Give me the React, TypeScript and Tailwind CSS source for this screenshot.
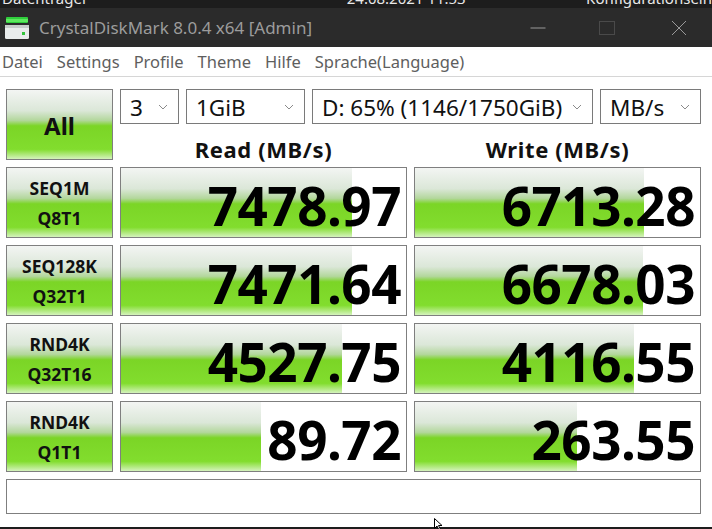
import React from "react";

interface Row { l1: string; l2: string; read: string; readPct: number; write: string; writePct: number }

const rows: Row[] = [
  { l1: "SEQ1M", l2: "Q8T1", read: "7478.97", readPct: 81, write: "6713.28", writePct: 80.5 },
  { l1: "SEQ128K", l2: "Q32T1", read: "7471.64", readPct: 81, write: "6678.03", writePct: 80 },
  { l1: "RND4K", l2: "Q32T16", read: "4527.75", readPct: 77.5, write: "4116.55", writePct: 77 },
  { l1: "RND4K", l2: "Q1T1", read: "89.72", readPct: 49, write: "263.55", writePct: 57 },
];

const green =
  "bg-[linear-gradient(180deg,#f3f5f3_0%,#dbe7d8_30%,#b3d79c_44%,#7bd526_52%,#82dd2e_86%,#d5f3bd_100%)]";

function Chevron() {
  return (
    <svg width="10" height="6" viewBox="0 0 10 6" className="shrink-0">
      <path d="M1 1l4 4 4-4" fill="none" stroke="#8a8a8a" strokeWidth="1" />
    </svg>
  );
}

function Select({ value, w }: { value: string; w: string }) {
  return (
    <div className={`${w} h-[35px] border border-[#7a7a7a] bg-white flex items-center justify-between pl-[9px] pr-[10px]`}>
      <span className="text-[22.5px] text-[#111] leading-none pt-[3px]">{value}</span>
      <Chevron />
    </div>
  );
}

function Label({ a, b }: { a: string; b?: string }) {
  return (
    <div className={`w-[107px] h-[71px] border border-[#7f7f7f] ${green} flex flex-col items-center justify-center`}>
      <span className="text-[17.5px] font-bold leading-[30px] text-[#111]">{a}</span>
      {b && <span className="text-[17.5px] font-bold leading-[30px] text-[#111]">{b}</span>}
    </div>
  );
}

function Value({ v, pct }: { v: string; pct: number }) {
  return (
    <div className="relative w-[287px] h-[71px] border border-[#7f7f7f] bg-white">
      <div className={`absolute left-0 top-0 bottom-0 ${green}`} style={{ width: `${pct}%` }} />
      <div className="relative h-full flex items-center justify-end pr-[5px] pt-[5px]">
        <span className="text-[53px] font-bold leading-none text-black tracking-[-0.5px]">{v}</span>
      </div>
    </div>
  );
}

export default function App() {
  return (
    <div className="w-[712px] h-[529px] bg-white overflow-hidden relative flex flex-col font-['Noto_Sans',sans-serif]">
      <div className="h-[8px] bg-[#1d1d1d] overflow-hidden relative shrink-0">
        <div className="flex text-[15px] text-[#e8e8e8] leading-none -mt-[9px] whitespace-nowrap">
          <span className="ml-[2px] w-[360px]">Datenträger</span>
          <span className="w-[250px]">24.08.2021 11:53</span>
          <span>Konfigurationsein</span>
        </div>
      </div>
      <div className="h-[39px] bg-[#2b2b2b] flex items-center shrink-0">
        <svg width="24" height="24" viewBox="0 0 24 24" className="ml-[5px] mt-[1px]">
          <rect x="1" y="1" width="22" height="6" rx="1" fill="#2fcf3c" />
          <rect x="1" y="3" width="22" height="3" fill="#5ee85f" />
          <rect x="0" y="9" width="24" height="14" rx="1.5" fill="#e9ecec" />
          <rect x="0" y="9" width="24" height="3" fill="#c7cbcb" />
          <rect x="17" y="16" width="3" height="3" fill="#33c43b" />
        </svg>
        <span className="ml-[10px] text-[17px] text-[#9c9c9c] leading-none">CrystalDiskMark 8.0.4 x64 [Admin]</span>
        <div className="ml-auto flex items-center h-full">
          <svg width="16" height="16" viewBox="0 0 16 16" className="mr-[53px]">
            <path d="M0.5 8h15" stroke="#9a9a9a" strokeWidth="1" />
          </svg>
          <svg width="16" height="16" viewBox="0 0 16 16" className="mr-[56px]">
            <rect x="0.5" y="1.5" width="15" height="13" fill="none" stroke="#4a4a4a" strokeWidth="1" />
          </svg>
          <svg width="16" height="16" viewBox="0 0 16 16" className="mr-[25px]">
            <path d="M1 1l14 14M15 1L1 15" stroke="#9a9a9a" strokeWidth="1" />
          </svg>
        </div>
      </div>
      <div className="h-[29px] flex items-center gap-[14px] pl-[2px] pt-[2px] text-[16.5px] text-[#5e5e5e] leading-none shrink-0">
        <span>Datei</span>
        <span>Settings</span>
        <span>Profile</span>
        <span>Theme</span>
        <span>Hilfe</span>
        <span>Sprache(Language)</span>
      </div>
      <div className="h-px bg-[#d6d6d6] shrink-0" />
      <div className="flex flex-col gap-[7px] pl-[6px] pt-[12px]">
        <div className="flex gap-[7px]">
          <div className={`w-[107px] h-[71px] border border-[#7f7f7f] ${green} flex items-center justify-center`}>
            <span className="text-[24px] font-bold text-[#111] leading-none pt-[2px]">All</span>
          </div>
          <div className="flex flex-col w-[581px]">
            <div className="flex gap-[7px]">
              <Select value="3" w="w-[59px]" />
              <Select value="1GiB" w="w-[119px]" />
              <Select value="D: 65% (1146/1750GiB)" w="w-[281px]" />
              <Select value="MB/s" w="w-[101px]" />
            </div>
            <div className="flex-1 flex gap-[7px] items-end">
              <div className="w-[287px] text-center text-[22px] tracking-[0.6px] font-bold text-[#111] leading-none">Read (MB/s)</div>
              <div className="w-[287px] text-center text-[22px] tracking-[0.6px] font-bold text-[#111] leading-none">Write (MB/s)</div>
            </div>
          </div>
        </div>
        {rows.map((r, i) => (
          <div key={i} className="flex gap-[7px]">
            <Label a={r.l1} b={r.l2} />
            <Value v={r.read} pct={r.readPct} />
            <Value v={r.write} pct={r.writePct} />
          </div>
        ))}
        <div className="w-[695px] h-[35px] border border-[#7f7f7f] bg-white" />
      </div>
      <div className="absolute left-0 right-0 bottom-0 h-[2px] bg-[#1d1d1d]" />
      <svg width="12" height="12" viewBox="0 0 12 12" className="absolute left-[434px] top-[518px]">
        <path d="M0.5 0.5v10l2.5-2.5 2 4 1.5-.7-2-3.8h3.5z" fill="#fff" stroke="#000" strokeWidth="1" />
      </svg>
    </div>
  );
}
